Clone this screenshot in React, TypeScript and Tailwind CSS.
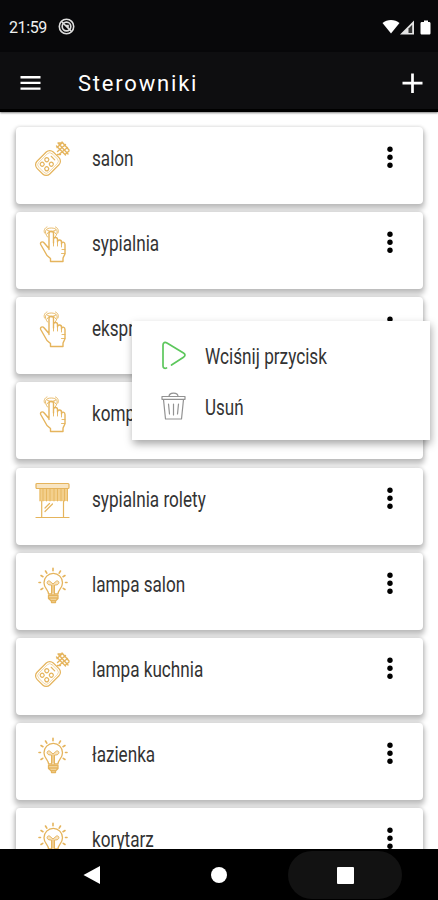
import React from 'react';

type DeviceKind = 'remote' | 'finger' | 'blind' | 'bulb';

interface Device {
  name: string;
  kind: DeviceKind;
}

const devices: Device[] = [
  { name: 'salon', kind: 'remote' },
  { name: 'sypialnia', kind: 'finger' },
  { name: 'ekspres', kind: 'finger' },
  { name: 'komputer', kind: 'finger' },
  { name: 'sypialnia rolety', kind: 'blind' },
  { name: 'lampa salon', kind: 'bulb' },
  { name: 'lampa kuchnia', kind: 'remote' },
  { name: 'łazienka', kind: 'bulb' },
  { name: 'korytarz', kind: 'bulb' },
];

const iconProps = {
  width: 36,
  height: 38,
  viewBox: '0 0 36 38',
  fill: 'none',
  stroke: '#e5b45c',
  strokeLinecap: 'round' as const,
  strokeLinejoin: 'round' as const,
};

const RemoteIcon = () => (
  <svg {...iconProps} strokeWidth="1.2">
    <g transform="rotate(45 13 23)">
      <rect x="4" y="11.5" width="18" height="23" rx="5" />
      <rect x="6" y="13.5" width="14" height="19" rx="3.4" strokeWidth="0.5" />
      <circle cx="9.8" cy="21.5" r="2" />
      <circle cx="16.2" cy="21.5" r="2" />
      <circle cx="9.8" cy="28" r="2" />
      <circle cx="16.2" cy="28" r="2" />
      <path d="M10.500 16h5" />
    </g>
    <path d="M23 3l10 11M27 2l7 8M21.500 6l9 9M23 3h4M22 7.500l5-4.500M22.500 11.500l8-7M24.500 14l8-6.500M30 14.500l4-3.500M22.500 14.500h3" strokeWidth="1.400" />
  </svg>
);

const FingerIcon = () => (
  <svg {...iconProps} strokeWidth="1.4">
    <path d="M14 24.500V8.500c0-3 4.500-3 4.500 0V18v-3.500c0-2.600 4-2.600 4 0V17c0-3 4-2.500 4 0v2c0-2.800 3.500-2.300 3.500.5V28c0 2.500-2 3.500-2 5.500V36.500H15.500v-3l-3.500-3-6.300-11c-1-2.500 1.800-3.500 3.500-1.500l4.800 5.500" />
    <path d="M18.500 18v3M22.500 17v4M26.500 19v3M26.500 28.500h3.500M27 24.500h3" strokeWidth="0.9" />
    <path d="M12.500 12c-4-5.500-2-9 3.700-9s8 3.500 4 9M9.500 8c-1-2.500 0-5 2.500-6M23 8c1-2.500 0-5-2.500-6M12 5l4.300 2L21 5M12 9l2.500-3M21 9l-2.500-3" strokeWidth="0.9" />
  </svg>
);

const BlindIcon = () => (
  <svg {...iconProps} strokeWidth="1.2">
    <rect x="1" y="2.500" width="33" height="5" rx="1" fill="#f8e5c3" />
    <rect x="4.500" y="8" width="28.500" height="12" fill="#f3cf8c" stroke="none" />
    <path d="M5 8v12M8 8v12M11.500 8v12M15 8v12M19 8v12M22.500 8v12M26 8v12M29.500 8v12M32.500 8v12" strokeWidth="0.9" />
    <path d="M6.700 20v16.500M28.500 20v16.500M1 36.500h33M10 27l4.500-4.500M10 30.500l7.500-7.500" />
  </svg>
);

const BulbIcon = () => (
  <svg {...iconProps} strokeWidth="1.3">
    <path d="M13.500 28c0-4.500-4.500-5.500-4.500-11.300a9 9 0 0 1 18.500 0c0 5.800-4.500 6.800-4.500 11.300z" />
    <path d="M13.500 29.500h9.500v3l-2.500 2.500v1.500h-4V35l-3-2.500zM14 32h8M15.500 34.500h5" fill="#f6deb0" />
    <path d="M16.500 28v-9c-6 .5-5-5-2-4l3.500 3 3.500-3c3-1 4 4.500-2 4v9M18 19v8" fill="#f8e3c1" strokeWidth="1" />
    <path d="M18 2.200v2.500M10.500 5l1.300 2.200M25.500 5l-1.300 2.200M6 9.500l2 1.200M30 9.500l-2 1.200M4 16.500h1.500M30.500 16.500H32M6 23.500l1.800-1.200M30 23.500l-1.800-1.200" strokeWidth="1.600" />
  </svg>
);

const icons: Record<DeviceKind, React.FC> = {
  remote: RemoteIcon,
  finger: FingerIcon,
  blind: BlindIcon,
  bulb: BulbIcon,
};

const StatusBar = () => (
  <div className="flex h-[52px] shrink-0 items-center bg-[#08080a] pl-[9px] pr-[7px] text-white">
    <span className="mt-[3px] w-[39px] text-[16px] leading-5 tracking-[-0.4px] text-[#f0f0f0]">21:59</span>
    <svg className="ml-[10px] mt-px" width="17" height="17" viewBox="0 0 17 17" fill="none" stroke="#dedede">
      <circle cx="8.500" cy="8.500" r="7.200" strokeWidth="1.600" />
      <circle cx="8.500" cy="8.500" r="4.300" strokeWidth="1.700" />
      <path d="M4 4l9 9M7 7.500h3v3" strokeWidth="1.700" />
    </svg>
    <svg className="ml-auto mt-[2px]" width="49" height="17" viewBox="0 0 49 17" fill="#fff">
      <path d="M0.500 4C5 0 13 0 17.500 4L9 14.500z" />
      <path d="M18 15.500L32 1.500v14z" fill="#e4e4e4" />
      <path d="M26.500 9.500l3.700-3.700V14h-3.700z" fill="#333" />
      <path d="M40 3h2V1.500h4V3h1c1 0 1.500.5 1.500 1.500V14c0 1-.5 1.500-1.500 1.500h-7c-1 0-1.500-.5-1.500-1.500V4.500C38.500 3.500 39 3 40 3z" />
    </svg>
  </div>
);

const Toolbar = () => (
  <div className="relative z-10 flex h-[60px] shrink-0 items-center border-b-[3px] border-black bg-[#0e0e10] pl-5 pr-[15px] text-white shadow-[0_1px_2px_rgba(0,0,0,0.5)]">
    <svg className="mt-[5px]" width="22" height="16" viewBox="0 0 22 16" fill="#fff">
      <path d="M.5 1h20v2.400H.5zM.5 6.700h20v2.400H.5zM.5 12.400h20v2.400H.5z" />
    </svg>
    <h1 className="ml-[36px] mt-[6px] text-[22px] leading-7 tracking-[1.8px]">Sterowniki</h1>
    <svg className="ml-auto mt-[5px]" width="22" height="22" viewBox="0 0 22 22" stroke="#fff" strokeWidth="2.700">
      <path d="M11.500 1.500v19.500M1.500 11.200h20" />
    </svg>
  </div>
);

const DeviceCard: React.FC<{ device: Device }> = ({ device }) => {
  const Icon = icons[device.kind];
  return (
    <div className="flex h-[77px] shrink-0 items-start rounded-[4px] bg-white pl-[19px] pt-[13px] shadow-[0_4px_5px_2px_rgba(0,0,0,0.22),0_0_3px_1px_rgba(0,0,0,0.08)]">
      <Icon />
      <span className="ml-[21px] mt-[5px] origin-left scale-x-[0.797] whitespace-nowrap text-[21.5px] leading-7 text-[#333]">
        {device.name}
      </span>
      <svg className="ml-auto mr-[29px] mt-[6px]" width="8" height="24" viewBox="0 0 8 24" fill="#000">
        <circle cx="4" cy="3.200" r="2.700" />
        <circle cx="4" cy="11.200" r="2.700" />
        <circle cx="4" cy="19.200" r="2.700" />
      </svg>
    </div>
  );
};

const ContextMenu = () => (
  <div className="absolute left-[132px] top-[321px] z-20 flex h-[119px] w-[298px] flex-col bg-white pl-[29px] pt-[9px] shadow-[1px_4px_8px_rgba(0,0,0,0.35)]">
    <div className="flex h-[51px] items-center">
      <svg width="26" height="29" viewBox="0 0 26 29" fill="none" stroke="#5cc75c" strokeWidth="1.700" strokeLinecap="round" strokeLinejoin="round">
        <path d="M5.500 27c-2 .8-3.500 0-3.500-2v-21C2 1.500 4 .8 6 2l16.500 10c2 1.200 2 3 0 4.300L10.500 24" />
      </svg>
      <span className="ml-[18px] mt-[3px] origin-left scale-x-[0.8] whitespace-nowrap text-[21.5px] text-[#333]">Wciśnij przycisk</span>
    </div>
    <div className="flex h-[51px] items-center">
      <svg width="26" height="29" viewBox="0 0 26 29" fill="none" stroke="#929292" strokeWidth="1.200" strokeLinecap="round" strokeLinejoin="round">
        <path d="M1 4.500h23v2.800H1zM8 4.500c0-4.500 9-4.500 9 0M2.500 7.500L4.500 27h16L22.500 7.500M7.500 12l1 10M12.500 12v11M17.500 12l-1 10" />
      </svg>
      <span className="ml-[18px] mt-[3px] origin-left scale-x-[0.79] whitespace-nowrap text-[21.5px] text-[#333]">Usuń</span>
    </div>
  </div>
);

const NavigationBar = () => (
  <div className="relative z-10 flex h-[51px] shrink-0 items-center bg-black pl-[83px]">
    <svg width="18" height="20" viewBox="0 0 18 20" fill="#fff">
      <path d="M.5 10L17 1v18z" />
    </svg>
    <div className="ml-[110px] h-4 w-4 rounded-full bg-white" />
    <div className="ml-[61px] mt-px flex h-[48px] w-[114px] items-center justify-center rounded-full bg-[#121212]">
      <div className="h-[17px] w-[17px] rounded-[1px] bg-white" />
    </div>
  </div>
);

export default function App() {
  return (
    <div className="relative flex h-[900px] w-[438px] flex-col overflow-hidden bg-white font-['Roboto',sans-serif]">
      <StatusBar />
      <Toolbar />
      <main className="flex min-h-0 flex-1 flex-col gap-[8.15px] overflow-hidden pl-4 pr-[15px] pt-[15px]">
        {devices.map(device => (
          <DeviceCard key={device.name} device={device} />
        ))}
      </main>
      <ContextMenu />
      <NavigationBar />
    </div>
  );
}
